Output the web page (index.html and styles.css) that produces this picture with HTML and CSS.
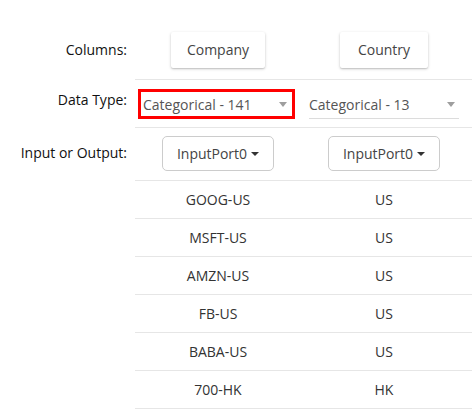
FILE: index.html
```html
<!DOCTYPE html>
<html>
<head>
<meta charset="utf-8">
<link rel="stylesheet" href="styles.css">
</head>
<body>
<div class="form">
  <div class="row row-cols">
    <div class="label">Columns:</div>
    <div class="cells">
      <div class="cell"><span class="col-btn">Company</span></div>
      <div class="cell"><span class="col-btn">Country</span></div>
    </div>
  </div>
  <div class="row row-type">
    <div class="label">Data Type:</div>
    <div class="cells">
      <div class="cell"><div class="select invalid"><span>Categorical - 141</span><i class="sel-arrow"></i></div></div>
      <div class="cell"><div class="select"><span>Categorical - 13</span><i class="sel-arrow"></i></div></div>
    </div>
  </div>
  <div class="row row-io">
    <div class="label">Input or Output:</div>
    <div class="cells">
      <div class="cell"><span class="dd-btn">InputPort0<i class="caret"></i></span></div>
      <div class="cell"><span class="dd-btn">InputPort0<i class="caret"></i></span></div>
    </div>
  </div>
  <div class="row data"><div class="label"></div><div class="cells"><div class="cell">GOOG-US</div><div class="cell">US</div></div></div>
  <div class="row data"><div class="label"></div><div class="cells"><div class="cell">MSFT-US</div><div class="cell">US</div></div></div>
  <div class="row data"><div class="label"></div><div class="cells"><div class="cell">AMZN-US</div><div class="cell">US</div></div></div>
  <div class="row data"><div class="label"></div><div class="cells"><div class="cell">FB-US</div><div class="cell">US</div></div></div>
  <div class="row data"><div class="label"></div><div class="cells"><div class="cell">BABA-US</div><div class="cell">US</div></div></div>
  <div class="row data"><div class="label"></div><div class="cells"><div class="cell">700-HK</div><div class="cell">HK</div></div></div>
</div>
</body>
</html>
```
FILE: styles.css
```css
html, body {
  margin: 0;
  padding: 0;
  background: #fff;
}
body {
  font-family: "Open Sans", "Liberation Sans", sans-serif;
  font-size: 14px;
  color: #333;
  width: 472px;
  overflow: hidden;
}
.row {
  display: flex;
}
.label {
  width: 135px;
  flex: none;
  box-sizing: border-box;
  padding-right: 8px;
  text-align: right;
  line-height: 20px;
  color: #111;
}
.cells {
  flex: 1;
  display: flex;
  border-bottom: 1px solid #e6e6e6;
}
.cell {
  width: 166px;
  display: flex;
  justify-content: center;
  align-items: center;
}
.row-cols .cells {
  height: 80px;
  box-sizing: border-box;
  padding-top: 32px;
  padding-bottom: 12px;
}
.row-cols .label {
  padding-top: 40px;
}
.col-btn {
  display: inline-flex;
  align-items: center;
  justify-content: center;
  height: 36px;
  min-width: 88px;
  box-sizing: border-box;
  padding: 0 16px;
  background: #fff;
  border-radius: 2px;
  box-shadow: 0 1px 3px rgba(0,0,0,0.22), 0 1px 1px rgba(0,0,0,0.08);
  color: #444;
}
.row-type .cells {
  height: 48px;
  box-sizing: border-box;
  padding-top: 9px;
  align-items: flex-start;
}
.row-type .cell {
  align-items: flex-start;
}
.row-type .label {
  padding-top: 10px;
}
.select {
  width: 150px;
  height: 30px;
  box-sizing: border-box;
  border-bottom: 1px solid #dcdcdc;
  display: flex;
  align-items: center;
  justify-content: space-between;
  padding: 1px 4px 0 0;
  color: #555;
}
.select.invalid {
  width: 157px;
  border: 3px solid #f00;
  padding: 0 5px 0 2px;
  margin-right: 3px;
}
.sel-arrow {
  width: 0;
  height: 0;
  border-left: 4.5px solid transparent;
  border-right: 4.5px solid transparent;
  border-top: 5px solid #9e9e9e;
}
.row-io .cells {
  height: 53px;
  box-sizing: border-box;
  padding-top: 8px;
  padding-bottom: 9px;
}
.row-io .label {
  padding-top: 15px;
}
.dd-btn {
  display: inline-flex;
  align-items: center;
  height: 35px;
  box-sizing: border-box;
  padding: 0 14px;
  border: 1px solid #ccc;
  border-radius: 5px;
  background: #fff;
  color: #444;
}
.caret {
  width: 0;
  height: 0;
  margin-left: 4px;
  border-left: 4px solid transparent;
  border-right: 4px solid transparent;
  border-top: 4px solid #333;
}
.data .cells {
  height: 38px;
  box-sizing: border-box;
}
```
